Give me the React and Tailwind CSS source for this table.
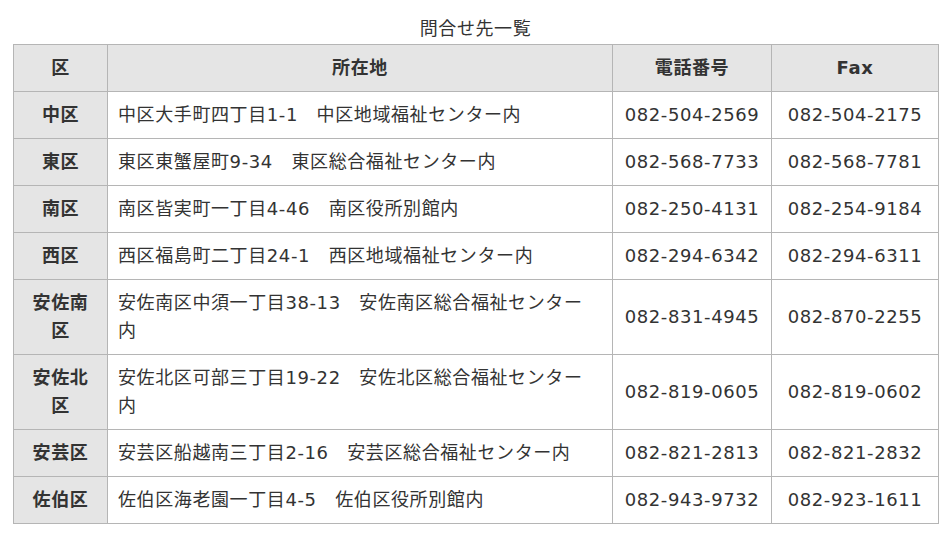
import React from "react";

const rows = [
  ["中区", "中区大手町四丁目1-1　中区地域福祉センター内", "082-504-2569", "082-504-2175"],
  ["東区", "東区東蟹屋町9-34　東区総合福祉センター内", "082-568-7733", "082-568-7781"],
  ["南区", "南区皆実町一丁目4-46　南区役所別館内", "082-250-4131", "082-254-9184"],
  ["西区", "西区福島町二丁目24-1　西区地域福祉センター内", "082-294-6342", "082-294-6311"],
  ["安佐南区", "安佐南区中須一丁目38-13　安佐南区総合福祉センター内", "082-831-4945", "082-870-2255"],
  ["安佐北区", "安佐北区可部三丁目19-22　安佐北区総合福祉センター内", "082-819-0605", "082-819-0602"],
  ["安芸区", "安芸区船越南三丁目2-16　安芸区総合福祉センター内", "082-821-2813", "082-821-2832"],
  ["佐伯区", "佐伯区海老園一丁目4-5　佐伯区役所別館内", "082-943-9732", "082-923-1611"],
];

export default function App() {
  return (
    <div
      className="w-[952px] h-[538px] bg-white text-[#333333] text-[18px] leading-[28px] tracking-[0.6px] pt-[15px] pl-[13px]"
      style={{ fontFamily: '"DejaVu Sans", "Noto Sans CJK JP", sans-serif' }}
    >
      <div className="w-[925px] text-center h-[29px]">問合せ先一覧</div>
      <table className="w-[925px] table-fixed border-collapse">
        <colgroup>
          <col className="w-[94px]" />
          <col className="w-[505px]" />
          <col className="w-[159px]" />
          <col className="w-[167px]" />
        </colgroup>
        <thead>
          <tr className="bg-[#e5e5e5]">
            <th className="border border-[#b5b5b5] py-[9px] px-[10px] font-bold text-center">区</th>
            <th className="border border-[#b5b5b5] py-[9px] px-[10px] font-bold text-center">所在地</th>
            <th className="border border-[#b5b5b5] py-[9px] px-[10px] font-bold text-center">電話番号</th>
            <th className="border border-[#b5b5b5] py-[9px] px-[10px] font-bold text-center">Fax</th>
          </tr>
        </thead>
        <tbody>
          {rows.map((r) => (
            <tr key={r[0]}>
              <th className="border border-[#b5b5b5] bg-[#e5e5e5] py-[9px] px-[12px] font-bold text-center align-middle">
                {r[0]}
              </th>
              <td className="border border-[#b5b5b5] py-[9px] pl-[10px] pr-[22px] text-left align-middle">
                {r[1]}
              </td>
              <td className="border border-[#b5b5b5] py-[9px] px-[4px] text-center align-middle">{r[2]}</td>
              <td className="border border-[#b5b5b5] py-[9px] px-[4px] text-center align-middle">{r[3]}</td>
            </tr>
          ))}
        </tbody>
      </table>
    </div>
  );
}
